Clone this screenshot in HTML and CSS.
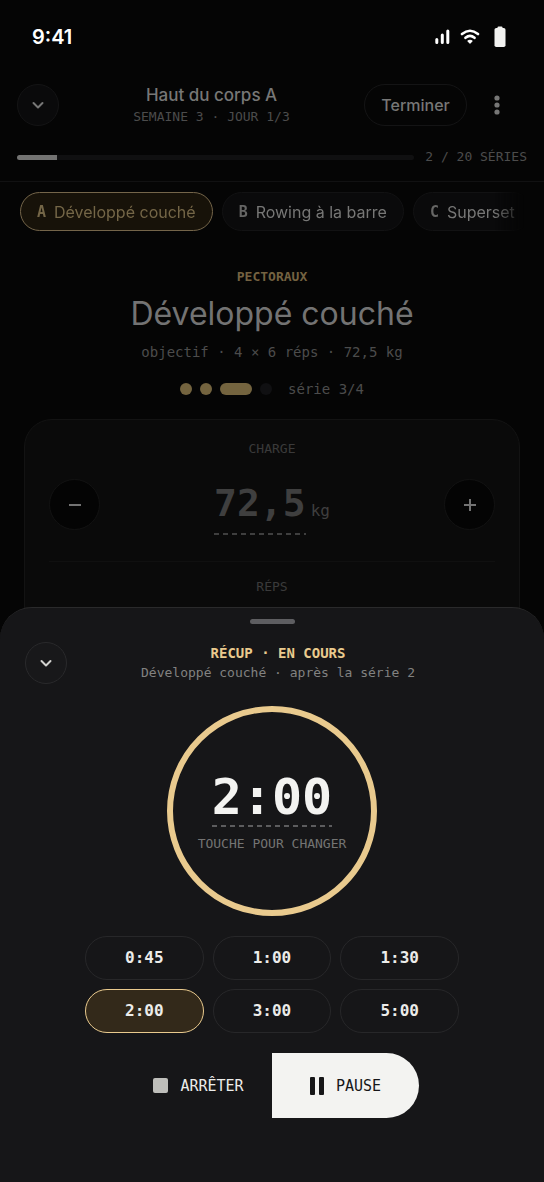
FILE: index.html
```html
<!DOCTYPE html>
<html lang="fr">
<head>
<meta charset="utf-8">
<meta name="viewport" content="width=device-width, initial-scale=1">
<title>Haut du corps A</title>
<link rel="stylesheet" href="styles.css">
</head>
<body>
<div class="status">
  <span class="clock">9:41</span>
  <div class="status-icons">
    <svg width="16" height="16" viewBox="0 0 16 16" fill="none" stroke="#fff" stroke-width="3" stroke-linecap="round" aria-hidden="true"><path d="M2.800 10.500v3M8.300 6v7.500M13.800 2v11.500"/></svg>
    <svg width="20" height="16" viewBox="0 0 20 16" fill="none" stroke="#fff" stroke-width="2.600" stroke-linecap="round" aria-hidden="true"><path d="M2 5Q10-1.500 18 5M5.500 8.800Q10 5 14.500 8.800"/><path d="M10 14 8 12Q10 10.500 12 12Z" fill="#fff" stroke-width="1.200" stroke-linejoin="round"/></svg>
    <svg class="battery" width="12" height="22" viewBox="0 0 12 22" fill="#f3f3f1" aria-hidden="true"><rect x="3.500" y="0.500" width="5" height="4" rx="1"/><rect x="0.500" y="2" width="11" height="19" rx="1.800"/></svg>
  </div>
</div>

<main class="workout">
  <header class="top">
    <button class="round" aria-label="Réduire"><svg width="14" height="14" viewBox="0 0 14 14" aria-hidden="true"><path d="M2.500 5 7 9.500 11.500 5"/></svg></button>
    <div class="top-title">
      <h1>Haut du corps A</h1>
      <p>SEMAINE 3 · JOUR 1/3</p>
    </div>
    <button class="finish">Terminer</button>
    <button class="more" aria-label="Plus d’options"><svg width="6" height="20" viewBox="0 0 6 20" aria-hidden="true"><circle cx="3" cy="3" r="2.600"/><circle cx="3" cy="10" r="2.600"/><circle cx="3" cy="17" r="2.600"/></svg></button>
  </header>
  <div class="progress">
    <div class="track"><div class="fill"></div></div>
    <span>2 / 20 SÉRIES</span>
  </div>
  <nav class="chips">
    <button class="chip active"><b>A</b>Développé couché</button>
    <button class="chip"><b>B</b>Rowing à la barre</button>
    <button class="chip"><b>C</b>Superset</button>
  </nav>
  <section class="exercise">
    <p class="muscle">PECTORAUX</p>
    <h2>Développé couché</h2>
    <p class="goal">objectif · 4 × 6 réps · 72,5 kg</p>
    <div class="sets">
      <i class="dot"></i><i class="dot"></i><i class="dot current"></i><i class="dot todo"></i>
      <span>série 3/4</span>
    </div>
  </section>
  <section class="card">
    <p class="label">CHARGE</p>
    <div class="stepper">
      <button class="step" aria-label="Diminuer"><svg width="14" height="14" viewBox="0 0 14 14" aria-hidden="true"><path d="M1 7h12"/></svg></button>
      <div class="load"><button class="value dashed">72,5</button><span>kg</span></div>
      <button class="step" aria-label="Augmenter"><svg width="14" height="14" viewBox="0 0 14 14" aria-hidden="true"><path d="M1 7h12M7 1v12"/></svg></button>
    </div>
    <hr>
    <p class="label">RÉPS</p>
  </section>
</main>

<section class="sheet">
  <div class="handle"></div>
  <header class="sheet-head">
    <button class="round light" aria-label="Fermer"><svg width="14" height="14" viewBox="0 0 14 14" aria-hidden="true"><path d="M2.500 5 7 9.500 11.500 5"/></svg></button>
    <div class="sheet-title">
      <h2>RÉCUP · EN COURS</h2>
      <p>Développé couché · après la série 2</p>
    </div>
  </header>
  <button class="ring">
    <span class="time dashed">2:00</span>
    <span class="hint">TOUCHE POUR CHANGER</span>
  </button>
  <div class="presets">
    <button>0:45</button>
    <button>1:00</button>
    <button>1:30</button>
    <button class="selected">2:00</button>
    <button>3:00</button>
    <button>5:00</button>
  </div>
  <div class="actions">
    <button class="stop"><i class="square"></i>ARRÊTER</button>
    <button class="pause"><svg width="14" height="18" viewBox="0 0 14 18" fill="#161618" aria-hidden="true"><rect width="5" height="18" rx="1"/><rect x="9" width="5" height="18" rx="1"/></svg>PAUSE</button>
  </div>
</section>
</body>
</html>
```
FILE: styles.css
```css
:root {
  --mono: "DejaVu Sans Mono", "Liberation Mono", monospace;
  --sans: Inter, "Liberation Sans", sans-serif;
  --gold: #e9ca8e;
}
* { box-sizing: border-box; }
body {
  margin: 0;
  min-height: 100vh;
  overflow: hidden;
  background: #050505;
  color: #777776;
  font-family: var(--sans);
}
h1, h2, p { margin: 0; font-weight: 400; }
button {
  display: flex;
  align-items: center;
  justify-content: center;
  margin: 0;
  padding: 0;
  border: 0;
  background: none;
  color: inherit;
  font: inherit;
  cursor: pointer;
}

.status {
  display: flex;
  align-items: center;
  justify-content: space-between;
  height: 74px;
  padding: 0 38px 0 32px;
}
.clock { color: #fff; font-size: 20px; font-weight: 600; }
.status-icons { display: flex; align-items: center; gap: 10px; }
.battery { margin-left: 4px; }

.top {
  display: flex;
  align-items: center;
  padding: 9px 26px 0 17px;
}
.round {
  flex: none;
  width: 42px;
  height: 42px;
  border: 1px solid #141415;
  border-radius: 50%;
  background: #0a0a0b;
}
.round path {
  fill: none;
  stroke: #777776;
  stroke-width: 2;
  stroke-linecap: round;
  stroke-linejoin: round;
}
.top-title { flex: 1; text-align: center; }
.top-title h1 { font-size: 17px; line-height: 24px; font-weight: 500; }
.top-title p { font: 13px/20px var(--mono); color: #4c4c4c; }
.finish {
  width: 103px;
  height: 42px;
  border: 1px solid #141415;
  border-radius: 21px;
  font-size: 16px;
  font-weight: 500;
}
.more { width: 42px; height: 42px; margin-left: 9px; }
.more svg { fill: #777776; }

.progress {
  display: flex;
  align-items: center;
  gap: 11px;
  padding: 21px 17px 15px;
  border-bottom: 1px solid #111112;
  font: 13px/18px var(--mono);
  color: #4c4c4c;
}
.track { flex: 1; height: 5px; border-radius: 3px; background: #101011; overflow: hidden; }
.fill { width: 10%; height: 100%; background: #737372; }

.chips {
  display: flex;
  gap: 9px;
  margin: 0 20px;
  padding: 10px 0;
  overflow: hidden;
  -webkit-mask-image: linear-gradient(to right, #000 94%, transparent);
  mask-image: linear-gradient(to right, #000 94%, transparent);
}
.chip {
  flex: none;
  gap: 8px;
  height: 39px;
  padding: 0 16px;
  border: 1px solid #121213;
  border-radius: 20px;
  background: #0a0a0b;
  font-size: 16px;
}
.chip b { font: 700 15px/20px var(--mono); color: #666665; }
.chip.active { border-color: #74654a; background: #171209; color: #746647; }
.chip.active b { color: #746647; }

.exercise { text-align: center; }
.muscle { margin-top: 27px; font: 700 13px/18px var(--mono); color: #746241; }
.exercise h2 { margin-top: 8px; font-size: 32px; line-height: 40px; color: #737373; }
.goal { margin-top: 8px; font: 14px/20px var(--mono); color: #4c4c4c; }
.sets {
  display: flex;
  align-items: center;
  justify-content: center;
  gap: 8px;
  margin-top: 17px;
  font: 14px/20px var(--mono);
  color: #4c4c4c;
}
.sets span { margin-left: 8px; }
.dot { width: 12px; height: 12px; border-radius: 6px; background: #74643f; }
.dot.current { width: 32px; }
.dot.todo { background: #101012; }

.card {
  height: 340px;
  margin: 20px 24px 0;
  padding: 20px 24px;
  border: 1px solid #131313;
  border-radius: 28px;
  background: #0a0a0a;
  text-align: center;
}
.label { font: 13px/18px var(--mono); color: #3a3a3a; }
.stepper {
  display: flex;
  align-items: center;
  justify-content: space-between;
  height: 51px;
  margin-top: 21px;
}
.step {
  width: 51px;
  height: 51px;
  border: 1px solid #121212;
  border-radius: 50%;
  background: #040404;
}
.step path { stroke: #737373; stroke-width: 2; }
.load { display: flex; align-items: baseline; gap: 5px; color: #3f3f3f; }
.load span { font: 16px/20px var(--mono); }
.value { font: 700 38px/44px var(--mono); padding-bottom: 10px; margin-top: 6px; }
.dashed {
  background-image: repeating-linear-gradient(to right, currentColor 0 5px, transparent 5px 9px);
  background-repeat: no-repeat;
  background-position: left bottom;
  background-size: 100% 2px;
}
.card hr { margin: 31px 0 16px; border: 0; border-top: 1px solid #101010; }

.sheet {
  position: fixed;
  left: 0;
  right: 0;
  bottom: 0;
  display: flex;
  flex-direction: column;
  align-items: center;
  padding: 11px 25px 64px;
  border-top: 1px solid #2a2a2b;
  border-radius: 32px 32px 0 0;
  background: #161618;
}
.handle { width: 45px; height: 5px; border-radius: 3px; background: #5e5e61; }
.sheet-head {
  display: flex;
  align-items: center;
  align-self: stretch;
  margin-top: 18px;
  padding-right: 30px;
}
.round.light { border-color: #29292b; background: #18181a; }
.round.light path { stroke: #d2d2cf; }
.sheet-title { flex: 1; text-align: center; font-family: var(--mono); }
.sheet-title h2 { font-size: 14px; line-height: 20px; font-weight: 700; color: var(--gold); }
.sheet-title p { font-size: 13px; line-height: 20px; color: #828281; }

.ring {
  flex-direction: column;
  width: 210px;
  height: 210px;
  margin-top: 22px;
  border: 6px solid var(--gold);
  border-radius: 50%;
  font-family: var(--mono);
}
.time {
  padding-bottom: 2px;
  font-size: 50px;
  line-height: 56px;
  font-weight: 700;
  color: #f3f3f1;
  background-image: repeating-linear-gradient(to right, #5c5c5e 0 5px, transparent 5px 9px);
}
.hint { margin-top: 8px; font-size: 13px; line-height: 18px; color: #747473; }

.presets {
  display: grid;
  grid-template-columns: repeat(3, 1fr);
  gap: 9px;
  width: 374px;
  max-width: 100%;
  margin-top: 20px;
}
.presets button {
  height: 44px;
  border: 1px solid #272729;
  border-radius: 22px;
  font: 700 16px/20px var(--mono);
  color: #ececea;
}
.presets .selected { border-color: var(--gold); background: #33291a; }

.actions { display: flex; margin-top: 20px; }
.actions button {
  gap: 12px;
  width: 147px;
  height: 65px;
  font: 15px/20px var(--mono);
  color: #ececea;
}
.square { width: 15px; height: 15px; border-radius: 2px; background: #bebeba; }
.actions .pause { border-radius: 0 33px 33px 0; background: #f3f3f1; color: #161618; }
```
